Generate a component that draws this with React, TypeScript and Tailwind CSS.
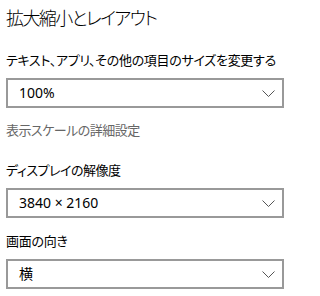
import React from "react";

const font = {
  fontFamily: '"Noto Sans", "Noto Sans CJK JP", sans-serif',
};

function Chevron() {
  return (
    <svg width="13" height="7" viewBox="0 0 13 7" className="shrink-0">
      <polyline points="0.5,0.5 6.5,6.5 12.5,0.5" fill="none" stroke="#555" strokeWidth="1" />
    </svg>
  );
}

function Select({ value }: { value: string }) {
  return (
    <div className="w-[278px] h-[30px] border-2 border-[#999] bg-white flex items-center justify-between pl-[11px] pr-[7px]">
      <span className="text-[14px] leading-none text-black">{value}</span>
      <Chevron />
    </div>
  );
}

export default function App() {
  return (
    <div
      className="w-[292px] h-[296px] bg-white px-[6px] overflow-hidden whitespace-nowrap [font-feature-settings:'palt']"
      style={font}
    >
      <h1 className="text-[18px] leading-[28px] pt-[4px] text-black font-light tracking-[-1.6px]">拡大縮小とレイアウト</h1>

      <p className="text-[13px] leading-[20px] mt-[18px] text-black tracking-[-0.3px]">テキスト、アプリ、その他の項目のサイズを変更する</p>
      <div className="mt-[8px]">
        <Select value="100%" />
      </div>

      <p className="text-[13px] leading-[20px] mt-[12px] text-[#666] tracking-[-0.5px]">表示スケールの詳細設定</p>

      <p className="text-[13px] leading-[20px] mt-[20px] text-black tracking-[-0.5px]">ディスプレイの解像度</p>
      <div className="mt-[8px]">
        <Select value="3840 × 2160" />
      </div>

      <p className="text-[13px] leading-[20px] mt-[13px] text-black tracking-[-0.3px]">画面の向き</p>
      <div className="mt-[8px]">
        <Select value="横" />
      </div>
    </div>
  );
}
